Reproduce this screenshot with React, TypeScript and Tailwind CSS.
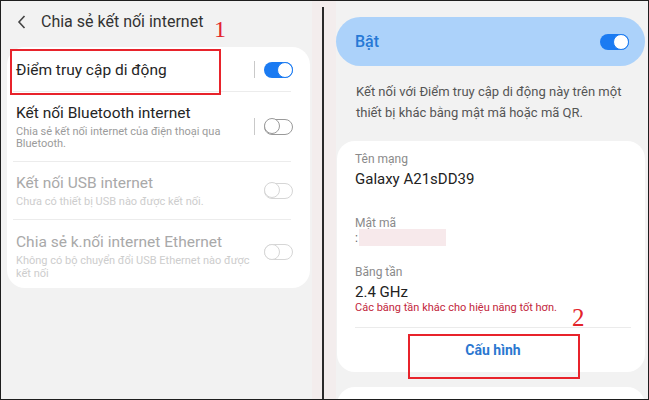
import React from 'react';

const font = { fontFamily: 'Roboto, "Noto Sans", sans-serif' };

function Toggle({ on, dim }: { on?: boolean; dim?: boolean }) {
  if (on) {
    return (
      <div className="relative w-[29px] h-[16px] rounded-full bg-[#1b7bf2]">
        <div className="absolute right-0 top-0 w-[16px] h-[16px] rounded-full bg-white border-[1.5px] border-[#1b7bf2]" />
      </div>
    );
  }
  return (
    <div
      className={`relative w-[29px] h-[16px] rounded-full border-[1.5px] ${
        dim ? 'border-[#d6d6d6]' : 'border-[#9a9a9a]'
      }`}
    >
      <div
        className={`absolute -left-[1.5px] -top-[1.5px] w-[16px] h-[16px] rounded-full bg-white border-[1.5px] ${
          dim ? 'border-[#d6d6d6]' : 'border-[#9a9a9a]'
        }`}
      />
    </div>
  );
}

function Row({
  title,
  sub,
  on,
  disabled,
  sep,
  h,
  top,
}: {
  title: string;
  sub?: string[];
  on?: boolean;
  disabled?: boolean;
  sep?: boolean;
  h: string;
  top?: boolean;
}) {
  return (
    <div className={`flex ${top ? 'items-start pt-[12px]' : 'items-center'} ${h}`}>
      <div className="flex-1 pl-[5px]">
        <div className={`text-[15.5px] leading-[20px] ${disabled ? 'text-[#a9a9a9]' : 'text-[#252525]'}`}>{title}</div>
        {sub && (
          <div className="mt-[3px]">
            {sub.map((s) => (
              <div
                key={s}
                className={`whitespace-nowrap text-[11px] leading-[12.5px] ${
                  disabled ? 'text-[#cdcdcd]' : 'text-[#9b9b9b]'
                }`}
              >
                {s}
              </div>
            ))}
          </div>
        )}
      </div>
      <div className={`flex items-center w-[39px] self-center ${top ? 'mt-[-10px]' : ''}`}>
        <div className={`w-[1px] h-[17px] ${sep ? 'bg-[#c9c9c9]' : 'bg-transparent'}`} />
        <div className="ml-[9px]">
          <Toggle on={on} dim={disabled} />
        </div>
      </div>
    </div>
  );
}

export default function App() {
  return (
    <div style={font} className="relative w-[649px] h-[400px] border border-[#1e1e1e] bg-[#f2f2f2] flex overflow-hidden">
      {/* Left panel */}
      <div className="relative w-[311px] flex flex-col">
        <div className="h-[46px] shrink-0 flex items-center pl-[15px]">
          <svg width="12" height="16" viewBox="0 0 12 16" className="mt-[-4px]">
            <path d="M8.5 2 L3 8 L8.5 14" fill="none" stroke="#444" strokeWidth="1.6" />
          </svg>
          <span className="ml-[13px] mt-[-4px] text-[16px] text-[#333]">Chia sẻ kết nối internet</span>
        </div>
        <span
          className="absolute left-[213px] top-[16px] text-[24px] text-[#e3242b] leading-none"
          style={{ fontFamily: '"Liberation Serif", serif' }}
        >
          1
        </span>

        <div className="shrink-0 ml-[6px] w-[303px] bg-white rounded-[18px] pr-[17px] pl-[4px] pt-[1px] pb-[6px]">
          <Row title="Điểm truy cập di động" on sep h="h-[43px]" />
          <div className="h-[1px] bg-[#ececec] mx-[2px]" />
          <Row
            title="Kết nối Bluetooth internet"
            sub={['Chia sẻ kết nối internet của điện thoại qua', 'Bluetooth.']}
            sep
            h="h-[69px]"
          />
          <div className="h-[1px] bg-[#ececec] mx-[2px]" />
          <Row title="Kết nối USB internet" sub={['Chưa có thiết bị USB nào được kết nối.']} disabled h="h-[57px]" />
          <div className="h-[1px] bg-[#ececec] mx-[2px]" />
          <Row
            title="Chia sẻ k.nối internet Ethernet"
            sub={['Không có bộ chuyển đổi USB Ethernet nào được', 'kết nối']}
            disabled
            top
            h="h-[62px]"
          />
        </div>

        <div className="absolute left-[9px] top-[48px] w-[211px] h-[46px] border-2 border-[#e8232b]" />
      </div>
      <div className="w-[10px] bg-[#f3eded]" />

      {/* Divider line */}
      <div className="flex flex-col w-[2px]">
        <div className="h-[6px] bg-[#f3eded]" />
        <div className="flex-1 bg-[#2a2a2a]" />
      </div>

      {/* Right panel */}
      <div className="relative flex-1 flex">
        <div className="w-[12px] bg-[#f3eded]" />
        <div className="flex-1 pr-[3px] pt-[16px] flex flex-col">
          <div className="shrink-0 h-[49px] rounded-full bg-[#acd2fa] flex items-center pl-[19px] pr-[16px]">
            <span className="flex-1 text-[16px] font-medium text-[#2679d6]">Bật</span>
            <Toggle on />
          </div>
          <div className="shrink-0 pl-[20px] pt-[15px] text-[13px] leading-[21px] text-[#555]">
            <div>Kết nối với Điểm truy cập di động này trên một</div>
            <div>thiết bị khác bằng mật mã hoặc mã QR.</div>
          </div>

          <div className="shrink-0 mt-[18px] ml-[1px] h-[231px] bg-white rounded-[18px] pl-[18px] pr-[14px] pt-[10px]">
            <div className="text-[12px] leading-[16px] text-[#8a8a8a]">Tên mạng</div>
            <div className="mt-[2px] text-[15px] leading-[20px] text-[#222]">Galaxy A21sDD39</div>
            <div className="mt-[26px] text-[12px] leading-[16px] text-[#8a8a8a]">Mật mã</div>
            <div className="flex items-center h-[17px] mt-[-2px]">
              <span className="text-[12px] text-[#666]">:</span>
              <div className="ml-[1px] w-[87px] h-[17px] bg-[#f7e9eb]" />
            </div>
            <div className="mt-[18px] text-[12px] leading-[16px] text-[#8a8a8a]">Băng tần</div>
            <div className="mt-[2px] text-[15px] leading-[20px] text-[#222]">2.4 GHz</div>
            <div className="mt-[-1px] text-[11px] leading-[13px] text-[#c2263c]">Các băng tần khác cho hiệu năng tốt hơn.</div>
            <div className="mt-[13px] h-[1px] bg-[#ebebeb]" />
            <div className="h-[44px] flex items-center justify-center text-[14px] font-bold text-[#2b77d0]">Cấu hình</div>
          </div>
          <div className="shrink-0 mt-[15px] ml-[1px] h-[40px] bg-white rounded-[18px]" />
        </div>

        <span
          className="absolute left-[248px] top-[304px] text-[25px] text-[#e3242b] leading-none"
          style={{ fontFamily: '"Liberation Serif", serif' }}
        >
          2
        </span>
        <div className="absolute left-[84px] top-[333px] w-[172px] h-[45px] border-2 border-[#e8232b]" />
      </div>
    </div>
  );
}
